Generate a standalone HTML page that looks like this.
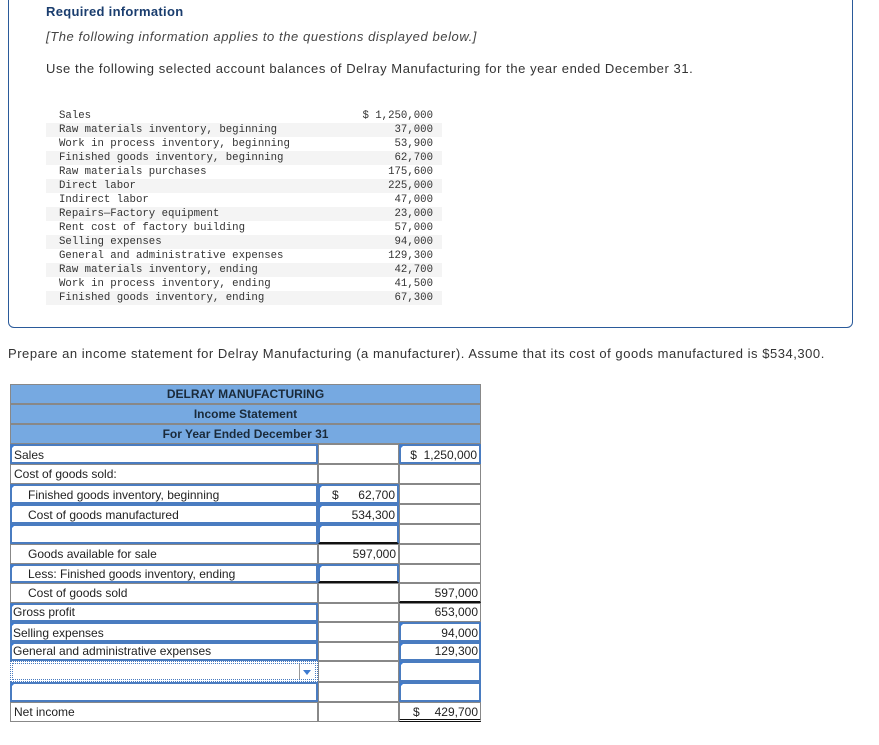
<!DOCTYPE html>
<html><head><meta charset="utf-8"><style>
*{margin:0;padding:0;box-sizing:border-box}
body{width:879px;height:745px;background:#fff;position:relative;overflow:hidden;font-family:"Liberation Sans",sans-serif;color:#222}
.box{position:absolute;left:8px;top:-10px;width:845px;height:338px;border:1px solid #2a5a9a;border-radius:6px}
.t{position:absolute;white-space:nowrap}
.mono{font-family:"Liberation Mono",monospace;font-size:10.7px;color:#333}
.row{position:absolute;left:46px;width:396px;height:14px}
.row.s{background:#f4f4f4}
.row .l{position:absolute;left:13px;top:0;line-height:14px}
.row .v{position:absolute;right:9px;top:0;line-height:14px}
.hd{position:absolute;left:0;width:471px;height:20px;background:#76a9e1;border:1px solid #888;text-align:center;font-size:12px;font-weight:bold;color:#1a2a3a;line-height:19px}
.c{position:absolute;height:20px;border:1px solid #888;font-size:12px;line-height:18px;color:#222}
.in{border:2px solid #4a7cc0}
.fl:before{content:"";position:absolute;left:-1px;top:-1px;border-left:4px solid #3d7bd0;border-bottom:4px solid transparent}
</style></head><body>
<div class="box"></div>
<div class="t" style="left:46px;top:4px;font-size:13px;font-weight:bold;color:#1a3d6e;letter-spacing:0.3px">Required information</div>
<div class="t" style="left:46px;top:29px;font-size:13px;font-style:italic;color:#444;letter-spacing:0.58px">[The following information applies to the questions displayed below.]</div>
<div class="t" style="left:46px;top:61px;font-size:13px;color:#333;letter-spacing:0.56px">Use the following selected account balances of Delray Manufacturing for the year ended December 31.</div>
<div class="mono">
<div class="row" style="top:109px"><span class="l">Sales</span><span class="v">$ 1,250,000</span></div>
<div class="row s" style="top:123px"><span class="l">Raw materials inventory, beginning</span><span class="v">37,000</span></div>
<div class="row" style="top:137px"><span class="l">Work in process inventory, beginning</span><span class="v">53,900</span></div>
<div class="row s" style="top:151px"><span class="l">Finished goods inventory, beginning</span><span class="v">62,700</span></div>
<div class="row" style="top:165px"><span class="l">Raw materials purchases</span><span class="v">175,600</span></div>
<div class="row s" style="top:179px"><span class="l">Direct labor</span><span class="v">225,000</span></div>
<div class="row" style="top:193px"><span class="l">Indirect labor</span><span class="v">47,000</span></div>
<div class="row s" style="top:207px"><span class="l">Repairs—Factory equipment</span><span class="v">23,000</span></div>
<div class="row" style="top:221px"><span class="l">Rent cost of factory building</span><span class="v">57,000</span></div>
<div class="row s" style="top:235px"><span class="l">Selling expenses</span><span class="v">94,000</span></div>
<div class="row" style="top:249px"><span class="l">General and administrative expenses</span><span class="v">129,300</span></div>
<div class="row s" style="top:263px"><span class="l">Raw materials inventory, ending</span><span class="v">42,700</span></div>
<div class="row" style="top:277px"><span class="l">Work in process inventory, ending</span><span class="v">41,500</span></div>
<div class="row s" style="top:291px"><span class="l">Finished goods inventory, ending</span><span class="v">67,300</span></div>
</div>
<div class="t" style="left:8px;top:346px;font-size:13px;color:#333;letter-spacing:0.53px">Prepare an income statement for Delray Manufacturing (a manufacturer). Assume that its cost of goods manufactured is $534,300.</div>

<div class="hd" style="left:10px;top:384px">DELRAY MANUFACTURING</div>
<div class="hd" style="left:10px;top:404px">Income Statement</div>
<div class="hd" style="left:10px;top:424px">For Year Ended December 31</div>

<div class="c in fl" style="left:10px;top:444px;width:308px;padding-left:2px">Sales</div>
<div class="c" style="left:318px;top:444px;width:81px"></div>
<div class="c in fl" style="left:399px;top:444px;width:82px;text-align:right;padding-right:2px">$&nbsp; 1,250,000</div>

<div class="c" style="left:10px;top:464px;width:308px;padding-left:3px">Cost of goods sold:</div>
<div class="c" style="left:318px;top:464px;width:81px"></div>
<div class="c" style="left:399px;top:464px;width:82px"></div>

<div class="c in fl" style="left:10px;top:484px;width:308px;padding-left:16px">Finished goods inventory, beginning</div>
<div class="c in fl" style="left:318px;top:484px;width:81px;text-align:right;padding-right:2px"><span style="position:absolute;left:12px">$</span>62,700</div>
<div class="c" style="left:399px;top:484px;width:82px"></div>

<div class="c in fl" style="left:10px;top:504px;width:308px;padding-left:16px">Cost of goods manufactured</div>
<div class="c in fl" style="left:318px;top:504px;width:81px;text-align:right;padding-right:2px">534,300</div>
<div class="c" style="left:399px;top:504px;width:82px"></div>

<div class="c in fl" style="left:10px;top:524px;width:308px"></div>
<div class="c in fl" style="left:318px;top:524px;width:81px;border-bottom:2px solid #111"></div>
<div class="c" style="left:399px;top:524px;width:82px"></div>

<div class="c" style="left:10px;top:544px;width:308px;padding-left:17px">Goods available for sale</div>
<div class="c" style="left:318px;top:544px;width:81px;text-align:right;padding-right:2px">597,000</div>
<div class="c" style="left:399px;top:544px;width:82px"></div>

<div class="c in fl" style="left:10px;top:564px;width:308px;padding-left:16px;height:19px;line-height:16px">Less: Finished goods inventory, ending</div>
<div class="c in fl" style="left:318px;top:564px;width:81px;height:19px;border-bottom:2px solid #111"></div>
<div class="c" style="left:399px;top:564px;width:82px;height:19px"></div>

<div class="c" style="left:10px;top:583px;width:308px;padding-left:17px">Cost of goods sold</div>
<div class="c" style="left:318px;top:583px;width:81px"></div>
<div class="c" style="left:399px;top:583px;width:82px;text-align:right;padding-right:2px;border-bottom:2px solid #111">597,000</div>

<div class="c in fl" style="left:10px;top:603px;width:308px;padding-left:1px;height:19px;line-height:15px">Gross profit</div>
<div class="c" style="left:318px;top:603px;width:81px;height:19px"></div>
<div class="c" style="left:399px;top:603px;width:82px;height:19px;text-align:right;padding-right:2px;line-height:17px">653,000</div>

<div class="c in fl" style="left:10px;top:622px;width:308px;padding-left:1px">Selling expenses</div>
<div class="c" style="left:318px;top:622px;width:81px"></div>
<div class="c in fl" style="left:399px;top:622px;width:82px;text-align:right;padding-right:1px">94,000</div>

<div class="c in fl" style="left:10px;top:642px;width:308px;padding-left:1px;height:19px;line-height:15px">General and administrative expenses</div>
<div class="c" style="left:318px;top:642px;width:81px;height:19px"></div>
<div class="c in fl" style="left:399px;top:642px;width:82px;height:19px;text-align:right;padding-right:1px;line-height:15px">129,300</div>

<div class="c" style="left:10px;top:661px;width:308px;height:21px;border:1px dotted #4a7cc0;outline:1px dotted #4a7cc0;outline-offset:-3px"><div style="position:absolute;right:2px;top:2px;width:16px;height:15px;border-left:1px solid #999"></div><div style="position:absolute;right:6px;top:8px;border-left:4px solid transparent;border-right:4px solid transparent;border-top:5px solid #3d7bd0"></div></div>
<div class="c" style="left:318px;top:661px;width:81px;height:21px"></div>
<div class="c in fl" style="left:399px;top:661px;width:82px;height:21px"></div>

<div class="c in fl" style="left:10px;top:682px;width:308px"></div>
<div class="c" style="left:318px;top:682px;width:81px"></div>
<div class="c in fl" style="left:399px;top:682px;width:82px"></div>

<div class="c" style="left:10px;top:702px;width:308px;padding-left:3px">Net income</div>
<div class="c" style="left:318px;top:702px;width:81px"></div>
<div class="c" style="left:399px;top:702px;width:82px;text-align:right;padding-right:2px;border-bottom:3px double #111"><span style="position:absolute;left:13px">$</span>429,700</div>
</body></html>
